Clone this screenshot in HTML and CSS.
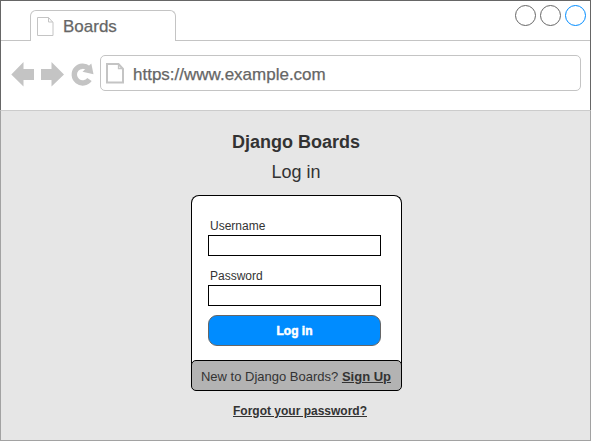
FILE: index.html
```html
<!DOCTYPE html>
<html lang="en">
<head>
<meta charset="utf-8">
<title>Boards</title>
<link rel="stylesheet" href="styles.css">
</head>
<body>
<div class="browser">
  <header class="chrome">
    <div class="tabbar">
      <div class="tab">
        <svg class="tab-icon" width="17" height="20" viewBox="0 0 17 20"><path d="M.5.5H11.5L16 5.5V18.5H.5ZM11.5.5V5H16" /></svg>
        <span class="tab-title">Boards</span>
      </div>
      <div class="controls">
        <span class="dot"></span><span class="dot"></span><span class="dot dot-active"></span>
      </div>
    </div>
    <div class="toolbar">
      <svg class="nav" width="83" height="26" viewBox="0 0 83 26">
        <path d="M.3 13.500L12.500 1V8H23V19H12.500V25.500Z" />
        <path d="M53 13.500L40.500 1V8H30V19H40.500V25.500Z" />
        <path class="reload" d="M78.500 18.500A8.400 8.400 0 1 1 77.500 7.500" />
        <path d="M80.300 2.500L82.500 13.300L71.500 10.800Z" />
      </svg>
      <div class="address">
        <svg class="page-icon" width="18" height="21" viewBox="0 0 18 21"><path d="M1 1H12.500L17 6V19.500H1Z" /><path class="fold" d="M12.500 1V5.500H17" /></svg>
        <span class="url">https://www.example.com</span>
      </div>
    </div>
  </header>
  <main class="page">
    <h1>Django Boards</h1>
    <h2>Log in</h2>
    <form class="card">
      <label for="username">Username</label>
      <input id="username" type="text">
      <label class="second" for="password">Password</label>
      <input id="password" type="password">
      <button type="button">Log in</button>
    </form>
    <div class="signup"><span class="new">New to Django Boards?</span> <a>Sign Up</a></div>
    <a class="forgot">Forgot your password?</a>
  </main>
</div>
</body>
</html>
```

FILE: styles.css
```css
* { box-sizing: border-box; }
body { margin: 0; font-family: "Liberation Sans", Arial, sans-serif; color: #333; overflow: hidden; }
.browser { width: 591px; height: 441px; display: flex; flex-direction: column; background: #fff; }
.chrome { height: 110px; border: 1px solid #666; border-bottom: 0; }
.tabbar { height: 40px; padding: 9px 4px 0 29px; display: flex; justify-content: space-between; border-bottom: 1px solid #c4c4c4; }
.tab { width: 146px; height: 31px; padding: 6px 0 0 6px; display: flex; background: #fff; border: 1px solid #c4c4c4; border-bottom: 0; border-radius: 6px 6px 0 0; }
.tab-icon { fill: none; stroke: #c4c4c4; stroke-width: 1; }
.tab-title { margin-left: 9px; font-size: 17px; line-height: 20px; color: #666; -webkit-text-stroke: .25px #666; }
.controls { display: flex; gap: 4px; margin-top: -5px; }
.dot { width: 21px; height: 21px; border: 1px solid #666; border-radius: 50%; }
.dot-active { border-color: #008cff; }
.toolbar { display: flex; padding: 14px 9px 0 10px; }
.nav { margin-top: 6px; fill: #c4c4c4; }
.nav .reload { fill: none; stroke: #c4c4c4; stroke-width: 5.4; }
.address { width: 481px; height: 36px; margin-left: 6px; padding: 7px 0 0 5px; display: flex; border: 1px solid #c4c4c4; border-radius: 5px; }
.page-icon { fill: none; stroke: #c4c4c4; stroke-width: 2; }
.fold { stroke-width: 1.3; }
.url { margin-left: 9px; font-size: 17px; line-height: 24px; color: #666; -webkit-text-stroke: .25px #666; }
.page { flex: 1; display: flex; flex-direction: column; align-items: center; padding: 19px 0 0 1px; background: #e6e6e6; border: 1px solid #a2a2a2; border-top-color: #ccc; }
h1, h2 { margin: 0; font-size: 18px; line-height: 24px; }
h2 { margin-top: 6px; font-weight: 400; }
.card { width: 211px; height: 170px; margin-top: 11px; padding: 22px 16px 0; display: flex; flex-direction: column; background: #fff; border: 1px solid #000; border-bottom: 0; border-radius: 8px 8px 0 0; }
label { margin-left: 2.5px; font-size: 12px; line-height: 17px; }
.second { margin-top: 12px; }
input { width: 173px; height: 21px; border: 1px solid #000; background: #fff; padding: 2px; }
button { width: 173px; height: 31px; margin-top: 9px; padding: 0 0 0 1px; border: 1px solid #666; border-radius: 9px; background: #008cff; color: #fff; font: bold 12px "Liberation Sans", Arial, sans-serif; -webkit-text-stroke: .5px #fff; }
.signup { position: relative; width: 211px; height: 31px; margin-top: -5px; border: 1px solid #000; border-radius: 5px; background: #b3b3b3; font-size: 13px; line-height: 32px; text-align: center; white-space: nowrap; }
a { font-weight: 700; text-decoration: underline; }
.forgot { margin: 12px 0 0 8px; font-size: 12px; line-height: 17px; }
```
